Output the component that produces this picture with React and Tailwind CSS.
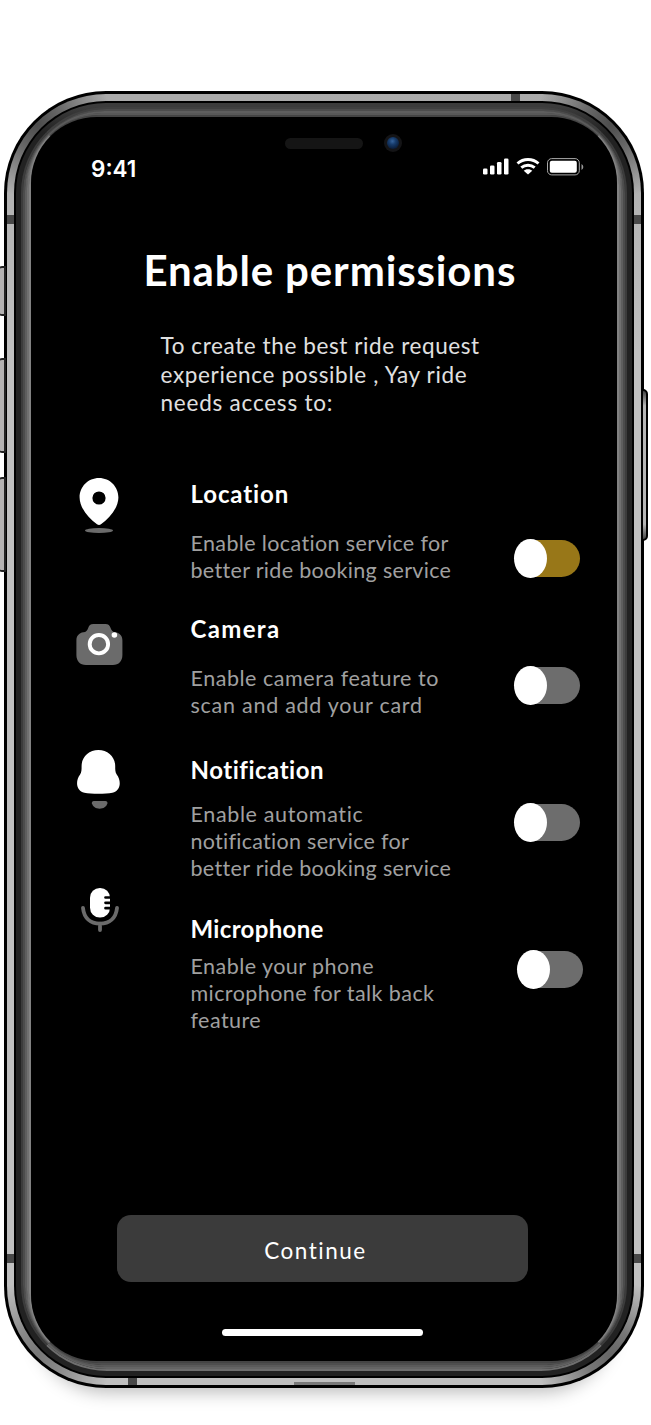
import React from "react";

function Toggle({ on = false, className = "" }) {
  return (
    <button
      role="switch"
      aria-checked={on}
      className={`relative block h-[38px] w-[66px] shrink-0 ${className}`}
    >
      <span
        className={`absolute right-0 top-[0.500px] h-[37px] w-[54px] rounded-r-[19px] ${on ? "bg-[#987718]" : "bg-[#6d6d6d]"}`}
      />
      <span className="absolute -top-[0.500px] left-[0.300px] h-[39.500px] w-[33px] rounded-[50%] bg-white" />
    </button>
  );
}

function PinIcon() {
  return (
    <svg width="40" height="57" viewBox="0 0 40 57">
      <ellipse cx="20" cy="52.500" rx="14" ry="2.600" fill="#6b6b6b" />
      <path
        fill="#fff"
        fillRule="evenodd"
        d="M20 0C9 0 .6 8.8.6 19.5C.6 29 8.5 39.500 18 46.300Q20 47.600 22 46.300C31.500 39.500 39.400 29 39.400 19.500C39.400 8.800 31 0 20 0ZM20 13.400a6.600 6.600 0 1 1 0 13.200a6.600 6.600 0 0 1 0-13.200Z"
      />
    </svg>
  );
}

function CameraIcon() {
  return (
    <svg width="47" height="42" viewBox="-0.4 0 47 42">
      <path
        fill="#6b6b6b"
        d="M17 0H29C32 0 33.500 1.600 34.300 4.200C35 6.600 36.500 8 39 8.300C43.500 9 46 12 46 16.500V31C46 37 42.500 41 36.500 41H9.500C3.500 41 0 37 0 31V16.500C0 12 2.500 9 7 8.300C9.500 8 11 6.600 11.700 4.200C12.500 1.600 14 0 17 0Z"
      />
      <circle cx="22.500" cy="20.200" r="9.200" fill="#6b6b6b" stroke="#fff" strokeWidth="3.900" />
      <circle cx="38" cy="11" r="2.800" fill="#fff" />
    </svg>
  );
}

function BellIcon() {
  return (
    <svg width="45" height="60" viewBox="-0.4 0 45 60">
      <path
        fill="#fff"
        d="M22 0C12.500 0 5.200 7 5.200 16C5.200 20 5.200 22 3.700 24.500C-1.500 31.500.0 41 8 42.700C15 44 29 44 36 42.700C44 41 45.500 31.500 40.300 24.500C38.800 22 38.800 20 38.800 16C38.800 7 31.500 0 22 0Z"
      />
      <path
        fill="#6b6b6b"
        d="M17.500 51H29C30.500 51 31.300 52 31 53.300C30 57 27 58.700 23.200 58.700C19.400 58.700 16.500 57 15.500 53.300C15.200 52 16 51 17.500 51Z"
      />
    </svg>
  );
}

function MicIcon() {
  return (
    <svg width="38" height="45" viewBox="0 0 38 45">
      <path
        d="M2 20C3 30 9.500 35.700 19 35.700S35 30 36 20M19 35.500V42"
        fill="none"
        stroke="#6b6b6b"
        strokeWidth="3.800"
        strokeLinecap="round"
      />
      <rect x="9" y="0" width="20" height="29.500" rx="9.800" fill="#fff" />
      <path
        d="M24.500 9.500H31M24.500 14.800H31M24.500 20.200H31"
        fill="none"
        stroke="#000"
        strokeWidth="2.700"
        strokeLinecap="round"
      />
    </svg>
  );
}

function StatusIcons() {
  return (
    <svg width="101" height="18" viewBox="0 0 101 18">
      <g fill="#fff">
        <rect x="0" y="10.500" width="4.500" height="6" rx="1.300" />
        <rect x="7" y="7.500" width="4.500" height="9" rx="1.300" />
        <rect x="14" y="4" width="4.500" height="12.500" rx="1.300" />
        <rect x="21" y="0.500" width="4.500" height="16" rx="1.300" />
        <path d="M45 11.200C47 11.200 48.300 11.800 49.300 12.700L45 16.600L40.700 12.700C41.700 11.800 43 11.200 45 11.200Z" />
        <rect x="66.800" y="2.700" width="27" height="12" rx="2" />
        <path d="M98.500 6V12Q100.300 11 100.300 9T98.500 6Z" opacity=".6" />
      </g>
      <path
        d="M34.500 5.500C40.500 .2 49.500 .2 55.500 5.500M38.300 9.600C42.200 6.400 47.800 6.400 51.700 9.600"
        fill="none"
        stroke="#fff"
        strokeWidth="3"
      />
      <rect x="64.500" y="0.600" width="31.800" height="16.300" rx="4.200" fill="none" stroke="#aaa" strokeWidth="1" />
    </svg>
  );
}

function Permission({ icon, title, lines, on, className, iconClass, titleClass, descClass, toggleClass }) {
  return (
    <section className={`grid grid-cols-[160px_323px_1fr] ${className}`}>
      <div className={`flex items-start ${iconClass}`}>{icon}</div>
      <div>
        <h2 className={`-ml-[0.500px] text-[24px] font-bold leading-7 ${titleClass}`}>{title}</h2>
        <p className={`whitespace-nowrap text-[21.500px] leading-[27px] text-[#a0a0a0] ${descClass}`}>
          {lines.map(([line, tracking]) => (
            <span key={line} className={`-ml-[0.500px] block ${tracking}`}>
              {line}
            </span>
          ))}
        </p>
      </div>
      <Toggle on={on} className={toggleClass} />
    </section>
  );
}

function Screen() {
  return (
    <div className="flex h-[1244px] w-[586px] flex-col overflow-hidden rounded-[66px] bg-black text-white">
      <header className="relative flex h-[115px] shrink-0 justify-between pl-[60px] pr-[33px] pt-[40px]">
        <span className="font-['Inter'] text-[22.500px] font-semibold leading-6">9:41</span>
        <span className="pt-px">
          <StatusIcons />
        </span>
        <span className="absolute left-[254px] top-[21px] h-[11px] w-[78px] rounded-full bg-[#151515]" />
        <span className="absolute left-[353px] top-[17px] flex h-[18px] w-[18px] items-center justify-center rounded-full bg-[#141416]">
          <span className="h-3 w-3 rounded-full bg-[radial-gradient(circle_at_45%_35%,#35639b_0%,#173c6c_32%,#0a1c38_75%)]" />
        </span>
      </header>
      <h1 className="shrink-0 whitespace-nowrap pl-[112.500px] pt-[15px] text-[42px] font-bold leading-[47px] tracking-[0.860px]">
        Enable permissions
      </h1>
      <p className="shrink-0 whitespace-nowrap pl-[129.500px] pt-[38px] text-[22.500px] leading-[28.700px] tracking-[0.600px] text-[#e0e0e0]">
        To create the best ride request
        <br />
        <span className="tracking-[0.670px]">experience possible , Yay ride</span>
        <br />
        <span className="tracking-[0.780px]">needs access to:</span>
      </p>
      <main className="flex flex-col pt-[62px]">
        <Permission
          className="h-[135px]"
          icon={<PinIcon />}
          iconClass="-mt-0.5 pl-[48px]"
          title="Location"
          titleClass="tracking-[0.880px]"
          lines={[
            ["Enable location service for", "tracking-[0.370px]"],
            ["better ride booking service", "tracking-[0.320px]"],
          ]}
          descClass="pt-[22px]"
          toggleClass="mt-[59px]"
          on
        />
        <Permission
          className="h-[141px]"
          icon={<CameraIcon />}
          iconClass="pl-[45px] pt-[9px]"
          title="Camera"
          titleClass="tracking-[1.350px]"
          lines={[
            ["Enable camera feature to", "tracking-[0.540px]"],
            ["scan and add your card", "tracking-[0.740px]"],
          ]}
          descClass="pt-[22px]"
          toggleClass="mt-[51px]"
        />
        <Permission
          className="h-[159px]"
          icon={<BellIcon />}
          iconClass="-mt-1.5 pl-[45px]"
          title="Notification"
          titleClass="tracking-[0.520px]"
          lines={[
            ["Enable automatic", "tracking-[0.640px]"],
            ["notification service for", "tracking-[0.280px]"],
            ["better ride booking service", "tracking-[0.320px]"],
          ]}
          descClass="pt-[17px]"
          toggleClass="mt-[47px]"
        />
        <Permission
          className="h-[134px]"
          icon={<MicIcon />}
          iconClass="-mt-[27px] pl-[49.500px]"
          title="Microphone"
          titleClass="tracking-[0.330px]"
          lines={[
            ["Enable your phone", "tracking-[0.460px]"],
            ["microphone for talk back", "tracking-[0.420px]"],
            ["feature", "tracking-[0.440px]"],
          ]}
          descClass="pt-[10px]"
          toggleClass="ml-[3px] mt-[35px]"
        />
      </main>
      <footer className="mt-auto flex flex-col pb-[25px]">
        <button className="ml-[86px] h-[67px] w-[411px] rounded-[14px] bg-[#3b3b3b] pr-[14px] pt-1 text-[22.500px] tracking-[1.500px]">
          Continue
        </button>
        <span className="ml-[191px] mt-[47px] h-[7px] w-[201px] rounded-full bg-white" />
      </footer>
    </div>
  );
}

function Bezel({ children }) {
  return (
    <div className="rounded-[86px] border-2 border-x-[#3c3c3c] border-b-[#6e6e6e] border-t-[#404040]">
      <div className="rounded-[84px] border-2 border-x-[#4c4c4c] border-b-[#646464] border-t-[#4c4c4c]">
        <div className="rounded-[80px] border-2 border-x-[#5e5e5e] border-b-[#5a5a5a] border-t-[#5e5e5e]">
          <div className="rounded-[75px] border-2 border-x-[#707070] border-b-[#4e4e4e] border-t-[#585858]">
            <div className="rounded-[70px] border-2 border-x-[#828282] border-b-[#444] border-t-[#444] bg-[#444]">
              {children}
            </div>
          </div>
        </div>
      </div>
    </div>
  );
}

const band = "absolute bg-[#484848]";
const sideButton = "absolute -left-[7px] w-[9px] rounded-l-[5px] border-2 border-[#222] bg-[#b4b2b2]";

export default function App() {
  return (
    <div className="h-[1425px] w-[651px] overflow-hidden bg-white pl-1 pt-[91px] font-['Lato',sans-serif]">
      <div className="relative h-[1297px] w-[640px] rounded-[102px] bg-black p-[3px] shadow-[0_34px_18px_-30px_rgba(0,0,0,0.28)]">
        <span className={`${sideButton} top-[175px] h-[50px]`} />
        <span className={`${sideButton} top-[267px] h-[95px]`} />
        <span className={`${sideButton} top-[386px] h-[95px]`} />
        <span className="absolute -right-[4px] top-[298px] h-[152px] w-[7px] rounded-r-[5px] border-2 border-black bg-[linear-gradient(180deg,#444,#b5b5b5_10%,#b5b5b5_90%,#444)]" />
        <div className="relative h-full rounded-[99px] bg-[radial-gradient(circle_at_30px_30px,#4c4c4c_0,#666_25px,transparent_75px),radial-gradient(circle_at_604px_30px,#4c4c4c_0,#666_25px,transparent_75px),radial-gradient(circle_at_30px_1261px,#777_0,#888_25px,transparent_75px),radial-gradient(circle_at_604px_1261px,#666_0,#777_25px,transparent_75px),linear-gradient(180deg,#aaa,#c0c0c0_20%,#c0c0c0)] p-[7px]">
          <span className={`${band} left-0 top-[121px] h-[9px] w-[7px]`} />
          <span className={`${band} right-0 top-[121px] h-[9px] w-[7px]`} />
          <span className={`${band} left-0 top-[1160px] h-[9px] w-[7px]`} />
          <span className={`${band} right-0 top-[1160px] h-[9px] w-[7px]`} />
          <span className={`${band} left-[504px] top-0 h-[7px] w-[9px]`} />
          <span className={`${band} bottom-0 left-[121px] h-[7px] w-[9px]`} />
          <span className="absolute bottom-0 left-[287px] h-[3px] w-[61px] bg-[#7a7a7a]" />
          <div className="h-full rounded-[92px] bg-black p-[2px]">
            <div className="h-full rounded-[90px] bg-[linear-gradient(180deg,#3c3c3c_0,#3c3c3c_4px,#222_30px)] px-[5px] pb-[5px] pt-[4px]">
              <Bezel>
                <Screen />
              </Bezel>
            </div>
          </div>
        </div>
      </div>
    </div>
  );
}
